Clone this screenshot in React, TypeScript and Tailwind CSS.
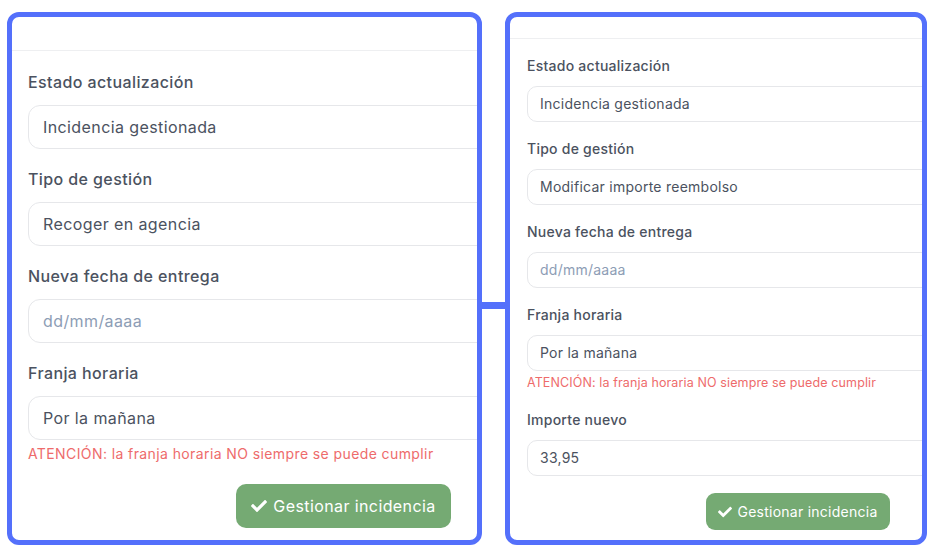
import { FaCheck } from "react-icons/fa";

type Size = "lg" | "sm";

const styles = {
  lg: {
    panel: "w-[475px] tracking-[0.4px]",
    header: "h-[34px]",
    body: "pl-[16px] pt-[19px]",
    label: "text-[16px] leading-[24px] mb-[11px]",
    input: "h-[44px] rounded-[12px] pl-[14px] pb-[1px] text-[16px]",
    gap: "mb-[18px]",
    warn: "text-[14px] leading-[20px] mt-[4px]",
    btnRow: "pr-[26px] pt-[20px]",
    btn: "h-[44px] w-[215px] rounded-[10px] text-[16px] gap-[6px]",
    icon: "w-[16px] h-[16px]",
  },
  sm: {
    panel: "w-[422px] tracking-[0.25px]",
    header: "h-[22px]",
    body: "pl-[17px] pt-[17px]",
    label: "text-[14px] leading-[20px] mb-[10px]",
    input: "h-[36px] rounded-[10px] pl-[12px] pb-[1px] text-[14px]",
    gap: "mb-[17px]",
    warn: "text-[12.5px] leading-[17px] mt-[3px] tracking-[0.12px]",
    btnRow: "pr-[32px] pt-[17px]",
    btn: "h-[37px] w-[184px] rounded-[9px] text-[14px] gap-[5px]",
    icon: "w-[14px] h-[14px]",
  },
};

function Field({ s, label, value, placeholder, warn }: { s: (typeof styles)["lg"]; label: string; value?: string; placeholder?: string; warn?: boolean }) {
  return (
    <div className={warn ? "" : s.gap}>
      <div className={`font-medium text-[#4b5260] ${s.label}`}>{label}</div>
      <div className={`w-[600px] border border-[#e6e7ea] bg-white flex items-center ${s.input}`}>
        {value ? <span className="text-[#4b5260]">{value}</span> : <span className="text-[#8d9db5]">{placeholder}</span>}
      </div>
      {warn && (
        <div className={`text-[#ee6b6b] ${s.warn}`}>ATENCIÓN: la franja horaria NO siempre se puede cumplir</div>
      )}
    </div>
  );
}

function Panel({ size, tipo, importe }: { size: Size; tipo: string; importe?: boolean }) {
  const s = styles[size];
  return (
    <div className={`h-[533px] border-[5px] border-[#5470fb] rounded-[12px] bg-white overflow-hidden ${s.panel}`}>
      <div className={`border-b border-[#eeeff1] ${s.header}`} />
      <div className={s.body}>
        <Field s={s} label="Estado actualización" value="Incidencia gestionada" />
        <Field s={s} label="Tipo de gestión" value={tipo} />
        <Field s={s} label="Nueva fecha de entrega" placeholder="dd/mm/aaaa" />
        <Field s={s} label="Franja horaria" value="Por la mañana" warn />
        {importe && (
          <div className="mt-[19px] -mb-[17px]">
            <Field s={s} label="Importe nuevo" value="33,95" />
          </div>
        )}
      </div>
      <div className={`flex justify-end ${s.btnRow}`}>
        <button className={`flex items-center justify-center bg-[#75aa73] text-white ${s.btn}`}>
          <FaCheck className={s.icon} />
          <span>Gestionar incidencia</span>
        </button>
      </div>
    </div>
  );
}

export default function App() {
  return (
    <div className="w-[933px] h-[550px] bg-white flex items-start pt-[12px] pl-[7px]" style={{ fontFamily: "Inter, 'Noto Sans', sans-serif" }}>
      <Panel size="lg" tipo="Recoger en agencia" />
      <div className="w-[23px] h-[7px] bg-[#5470fb] mt-[290px]" />
      <Panel size="sm" tipo="Modificar importe reembolso" importe />
    </div>
  );
}
